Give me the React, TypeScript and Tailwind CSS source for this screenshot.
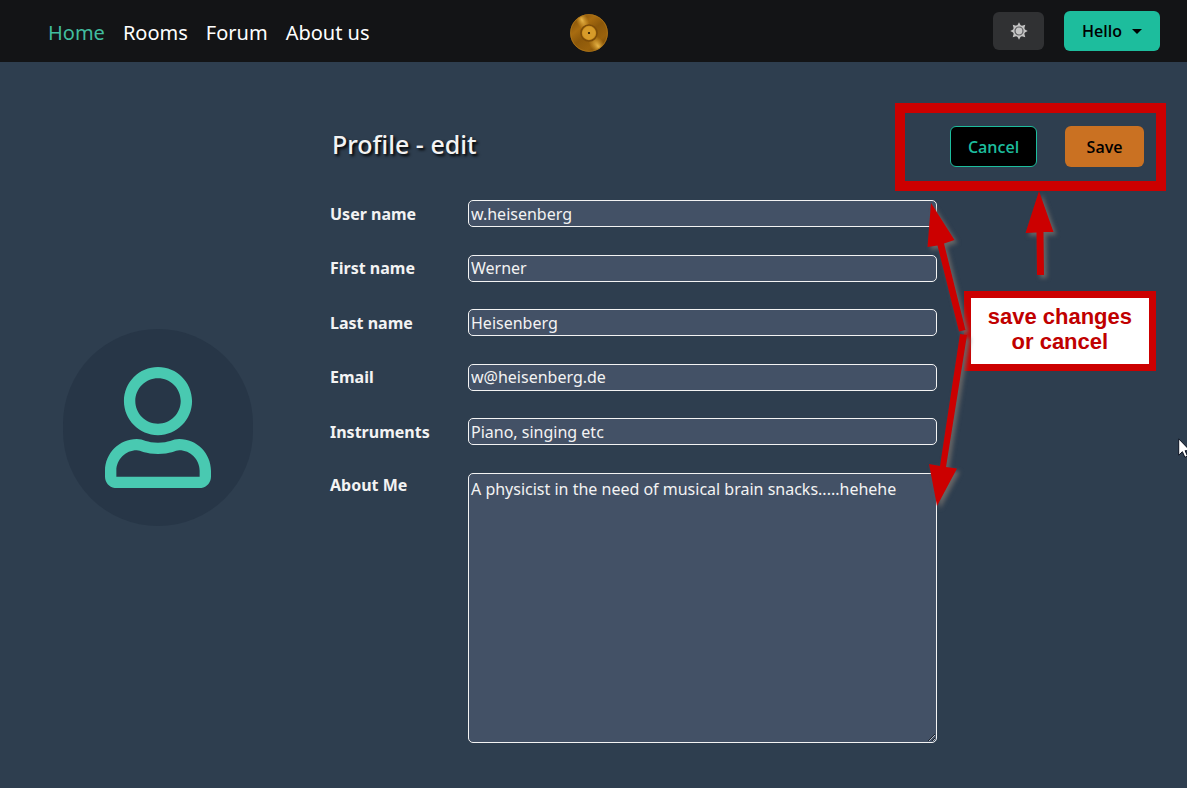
import React from "react";

const navItems = [
  { label: "Home", active: true },
  { label: "Rooms", active: false },
  { label: "Forum", active: false },
  { label: "About us", active: false },
];

const fields = [
  { id: "username", label: "User name", value: "w.heisenberg", type: "text" },
  { id: "firstname", label: "First name", value: "Werner", type: "text" },
  { id: "lastname", label: "Last name", value: "Heisenberg", type: "text" },
  { id: "email", label: "Email", value: "w@heisenberg.de", type: "email" },
  { id: "instruments", label: "Instruments", value: "Piano, singing etc", type: "text" },
];

function GoldRecord() {
  return (
    <svg viewBox="0 0 40 40" className="size-10" aria-label="Gold record" role="img">
      <defs>
        <linearGradient id="disc" x1="0.1" y1="0" x2="0.9" y2="1">
          <stop offset="0" stopColor="#7a4a08" />
          <stop offset="0.3" stopColor="#a86c10" />
          <stop offset="0.5" stopColor="#8c580a" />
          <stop offset="0.75" stopColor="#9a620c" />
          <stop offset="1" stopColor="#6e4206" />
        </linearGradient>
        <radialGradient id="shine">
          <stop offset="0" stopColor="#f0c050" stopOpacity="0.9" />
          <stop offset="1" stopColor="#e0a32c" stopOpacity="0" />
        </radialGradient>
        <clipPath id="discClip">
          <circle cx="20" cy="20" r="18.8" />
        </clipPath>
      </defs>
      <circle cx="20" cy="20" r="18.8" fill="url(#disc)" />
      <g clipPath="url(#discClip)">
        <ellipse cx="13" cy="7" rx="6" ry="12" fill="url(#shine)" transform="rotate(-28 13 7)" />
        <ellipse cx="29" cy="33" rx="7" ry="13" fill="url(#shine)" transform="rotate(-38 29 33)" />
      </g>
      <circle cx="20" cy="20" r="18.4" fill="none" stroke="#b07618" strokeWidth="0.8" />
      <circle cx="20" cy="20" r="8" fill="#c98d1e" stroke="#7d4c08" strokeWidth="1.6" />
      <circle cx="20" cy="20" r="6.4" fill="#d79b2a" />
      <circle cx="20" cy="20" r="1.1" fill="#1c1204" />
    </svg>
  );
}

function SunIcon() {
  return (
    <svg viewBox="0 0 18 18" className="size-[18px]" aria-hidden="true">
      <path
        d="M9 .3 11 4H7ZM9 17.7 7 14h4ZM.3 9 4 7v4ZM17.7 9 14 11V7ZM2.7 2.7l4.2 1.2-3 3ZM15.3 2.7l-1.2 4.2-3-3ZM2.7 15.3l1.2-4.2 3 3ZM15.3 15.3l-4.2-1.2 3-3Z"
        fill="#c4c4c4"
      />
      <circle cx="9" cy="9" r="5.3" fill="#5c5d60" stroke="#c4c4c4" strokeWidth="1.4" />
      <circle cx="9" cy="9" r="3.4" fill="#c4c4c4" />
    </svg>
  );
}

function UserIcon() {
  return (
    <svg viewBox="0 0 448 512" className="w-[106px]" fill="#49c9b1" aria-hidden="true">
      <path d="M313.6 304c-28.7 0-42.5 16-89.6 16-47.1 0-60.8-16-89.6-16C60.2 304 0 364.2 0 438.4V464c0 26.5 21.5 48 48 48h352c26.5 0 48-21.5 48-48v-25.6c0-74.2-60.2-134.4-134.4-134.4zM400 464H48v-25.6c0-47.6 38.8-86.4 86.4-86.4 14.6 0 38.3 16 89.6 16 51.7 0 74.9-16 89.6-16 47.6 0 86.4 38.8 86.4 86.4V464zM224 288c79.5 0 144-64.5 144-144S303.5 0 224 0 80 64.5 80 144s64.5 144 144 144zm0-240c52.9 0 96 43.1 96 96s-43.1 96-96 96-96-43.1-96-96 43.1-96 96-96z" />
    </svg>
  );
}

function Annotations() {
  return (
    <div className="pointer-events-none absolute inset-0 overflow-hidden">
      <div className="absolute top-[229px] right-[31px] border-7 border-[#cc0000] bg-white px-[17px] pt-1.5 pb-2.5 text-center font-['Liberation_Sans',Arial,sans-serif] text-[22px] leading-[25px] font-bold text-[#c00000]">
        save changes
        <br />
        or cancel
      </div>
      <svg
        viewBox="0 0 287 340"
        className="absolute top-32 right-0 h-[340px] w-[287px] drop-shadow-[3px_3px_2px_#666666]"
        fill="#cc0000"
        aria-hidden="true"
      >
        <path d="M31 13 54.5 50 44 53.5 65.5 140 59 141.5 37.5 55.5 27.5 57Z" />
        <path d="M139 1 153.5 42H143.5L144 85H137L136.5 42.5 125.5 43Z" />
        <path d="M37 316 29 274 40 276 60 144 67 145 46 277 57 278.5Z" />
      </svg>
      <svg viewBox="0 0 13 20" className="absolute top-94 -right-1 h-5 w-[13px]" aria-hidden="true">
        <path
          d="M.7.8V17.2L4.4 13.7 6.9 19.3 9.5 18.1 7.1 12.7H12.2Z"
          fill="#ffffff"
          stroke="#0b1220"
          strokeWidth="1"
        />
      </svg>
    </div>
  );
}

export default function App() {
  return (
    <div className="flex min-h-screen flex-col bg-[#2e3e4f] font-['Noto_Sans','Open_Sans',sans-serif] text-[#f3f3f3]">
      <header className="grid h-[62px] grid-cols-[1fr_auto_1fr] items-center bg-[#131416] pr-[27px] pl-12">
        <nav className="flex gap-[18px] pt-1 text-xl">
          {navItems.map((item) => (
            <a key={item.label} href="#" className={item.active ? "text-[#41bd9f]" : "text-white"}>
              {item.label}
            </a>
          ))}
        </nav>
        <a href="#" className="mt-1 mr-[30px]">
          <GoldRecord />
        </a>
        <div className="flex items-center justify-end gap-5">
          <button
            type="button"
            aria-label="Toggle theme"
            className="flex h-[38px] w-[51px] items-center justify-center rounded-md bg-[#303133]"
          >
            <SunIcon />
          </button>
          <button
            type="button"
            className="flex h-10 w-24 items-center justify-center gap-2.5 rounded-md bg-[#1dbd9d] font-['Open_Sans',sans-serif] font-semibold text-black"
          >
            Hello
            <span className="border-x-5 border-t-5 border-x-transparent border-t-black" />
          </button>
        </div>
      </header>

      <main className="relative flex flex-1">
        <aside className="flex w-[316px] shrink-0 justify-center pt-[267px]">
          <div className="flex h-[197px] w-[190px] items-center justify-center rounded-full bg-[#273647]">
            <UserIcon />
          </div>
        </aside>

        <form className="min-w-0 flex-1 pt-16 pb-11 pl-3.5" onSubmit={(e) => e.preventDefault()}>
          <div className="flex items-start justify-between pr-[43px]">
            <h1 className="pl-0.5 text-[25px] leading-9 font-medium [text-shadow:2px_2px_3px_#000000]">
              Profile - edit
            </h1>
            <div className="relative flex gap-7 font-['Open_Sans',sans-serif] font-semibold">
              <button
                type="button"
                className="h-[41px] w-[87px] rounded-md border border-[#1dbd9d] bg-black text-[#1dbd9d]"
              >
                Cancel
              </button>
              <button type="submit" className="h-[41px] w-[79px] rounded-md bg-[#ca7122] text-black">
                Save
              </button>
              <div className="pointer-events-none absolute -top-[23px] -right-[22px] -bottom-6 -left-[55px] border-10 border-[#cc0000]" />
            </div>
          </div>

          <div className="mt-[33px] mr-[250px] flex min-h-[543px] flex-col justify-between">
            {fields.map((field) => (
              <div key={field.id} className="flex items-center">
                <label htmlFor={field.id} className="w-[138px] shrink-0 font-bold">
                  {field.label}
                </label>
                <input
                  id={field.id}
                  type={field.type}
                  defaultValue={field.value}
                  className="h-[27px] min-w-0 flex-1 rounded-[5px] border border-[#f3f3f3] bg-[#435166] px-0.5"
                />
              </div>
            ))}
            <div className="flex items-start">
              <label htmlFor="about" className="w-[138px] shrink-0 font-bold">
                About Me
              </label>
              <textarea
                id="about"
                defaultValue="A physicist in the need of musical brain snacks.....hehehe"
                className="h-[270px] min-w-0 flex-1 rounded-[5px] border border-[#f3f3f3] bg-[#435166] px-0.5 pt-[3px]"
              />
            </div>
          </div>
        </form>
        <Annotations />
      </main>
    </div>
  );
}
